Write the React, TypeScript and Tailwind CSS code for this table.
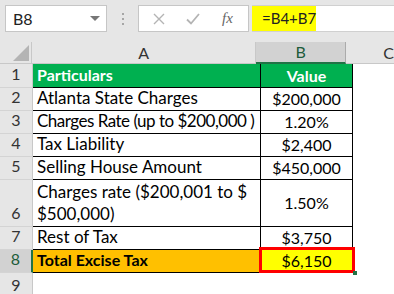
import React from "react";

type Row = {
  n: number;
  a: React.ReactNode;
  b: string;
  h: string;
  kind?: "head" | "total";
  tight?: boolean;
};

const ROWS: Row[] = [
  { n: 1, a: "Particulars", b: "Value", h: "h-[24px]", kind: "head" },
  { n: 2, a: "Atlanta State Charges", b: "$200,000", h: "h-[23px]" },
  { n: 3, a: "Charges Rate (up to $200,000 )", b: "1.20%", h: "h-[23px]", tight: true },
  { n: 4, a: "Tax Liability", b: "$2,400", h: "h-[23px]" },
  { n: 5, a: "Selling House Amount", b: "$450,000", h: "h-[23px]" },
  {
    n: 6,
    a: (
      <>
        Charges rate ($200,001 to $<br />
        $500,000)
      </>
    ),
    b: "1.50%",
    h: "h-[47px]",
  },
  { n: 7, a: "Rest of Tax", b: "$3,750", h: "h-[23px]" },
  { n: 8, a: "Total Excise Tax", b: "$6,150", h: "h-[23px]", kind: "total" },
];

function FormulaBar() {
  return (
    <div className="flex h-[42px] items-start pt-[5px]">
      <div className="ml-[5px] flex h-[27px] w-[102px] items-center justify-between border border-[#c6c6c6] bg-white pl-[7px] pr-[6px] text-[16px] text-[#222]">
        <span>B8</span>
        <svg width="10" height="6" viewBox="0 0 10 6">
          <path d="M0 0h10L5 5z" fill="#777" />
        </svg>
      </div>
      <div className="ml-[13px] flex h-[27px] w-[6px] flex-col items-center justify-center gap-[3px]">
        <span className="h-[2px] w-[2px] bg-[#a6a6a6]" />
        <span className="h-[2px] w-[2px] bg-[#a6a6a6]" />
        <span className="h-[2px] w-[2px] bg-[#a6a6a6]" />
      </div>
      <div className="ml-[12px] flex h-[27px] w-[111px] items-center border border-[#c6c6c6] bg-white">
        <svg className="ml-[14px]" width="12" height="12" viewBox="0 0 12 12">
          <path d="M1 1l10 10M11 1L1 11" stroke="#b4b4b4" strokeWidth="1.4" />
        </svg>
        <svg className="ml-[21px]" width="14" height="12" viewBox="0 0 14 12">
          <path d="M1 6.5l4 4L13 1" stroke="#b4b4b4" strokeWidth="1.8" fill="none" />
        </svg>
        <span className="ml-[22px] font-['Liberation_Serif',serif] text-[15px] italic text-[#666]">fx</span>
      </div>
      <div className="ml-[3px] flex h-[27px] flex-1 items-stretch border-y border-[#d0d0d0] bg-white">
        <div className="flex w-[64px] items-center whitespace-nowrap bg-[#ffff00] pl-[10px] text-[15px] text-[#222]">
          =B4+B7
        </div>
      </div>
    </div>
  );
}

function ColumnHeaders() {
  return (
    <div className="flex h-[22px] text-[16px] text-[#333]">
      <div className="relative w-[33px] border-r border-b border-[#c8c8c8]">
        <svg className="absolute right-[2px] bottom-[2px]" width="16" height="16" viewBox="0 0 16 16">
          <path d="M16 0V16H0z" fill="#b4b4b4" />
        </svg>
      </div>
      <div className="flex w-[227px] items-center justify-center border-r border-b border-[#c8c8c8]">A</div>
      <div className="flex w-[92px] items-center justify-center border-r border-[#ababab] border-b-2 border-b-[#217346] bg-[#d2d2d2] text-[#1d5c3a]">
        B
      </div>
      <div className="flex flex-1 items-center justify-start border-b border-[#c8c8c8] pl-[37px]">C</div>
    </div>
  );
}

function DataRow({ row }: { row: Row }) {
  const head = row.kind === "head";
  const total = row.kind === "total";
  const rowBg = head
    ? "bg-[#00b050] text-white font-bold text-[16px]"
    : total
      ? "bg-[#ffc000] font-bold text-[16px]"
      : "bg-white text-[17px]";
  return (
    <div className={`flex ${row.h}`}>
      <div
        className={`flex w-[33px] items-end justify-center border-b border-[#d4d4d4] pb-[1px] ${
          total ? "border-r-2 border-r-[#217346] bg-[#d2d2d2] text-[#1d5c3a]" : "border-r border-r-[#c8c8c8] text-[#333]"
        }`}
      >
        {row.n}
      </div>
      <div
        className={`flex w-[228px] items-end whitespace-nowrap border-r border-b border-black pb-[1px] pl-[4px] leading-[22px] ${rowBg} ${
          row.tight ? "tracking-[-0.5px]" : ""
        }`}
      >
        <span>{row.a}</span>
      </div>
      <div
        className={`relative flex w-[92px] items-center justify-center border-r border-b border-black ${
          head ? "bg-[#00b050] font-bold text-white" : total ? "bg-[#ffff00]" : "bg-white"
        }`}
      >
        {row.b}
        {total && (
          <>
            <div className="absolute -top-[3px] -left-[2px] -right-[3px] -bottom-[1px] border-[3px] border-[#ff0000]" />
            <div className="absolute -right-[5px] -bottom-[3px] h-[4px] w-[4px] bg-[#217346]" />
          </>
        )}
      </div>
      <div className="flex-1 bg-white" />
    </div>
  );
}

export default function App() {
  return (
    <div className="h-[294px] w-[394px] overflow-hidden bg-[#e6e6e6] font-['Lato',sans-serif] text-[16px] text-black">
      <FormulaBar />
      <ColumnHeaders />
      {ROWS.map((r) => (
        <DataRow key={r.n} row={r} />
      ))}
      <div className="flex h-[24px]">
        <div className="flex w-[33px] items-center justify-center border-r border-b border-[#c8c8c8] text-[#333]">9</div>
        <div className="flex-1 bg-white" />
      </div>
    </div>
  );
}
